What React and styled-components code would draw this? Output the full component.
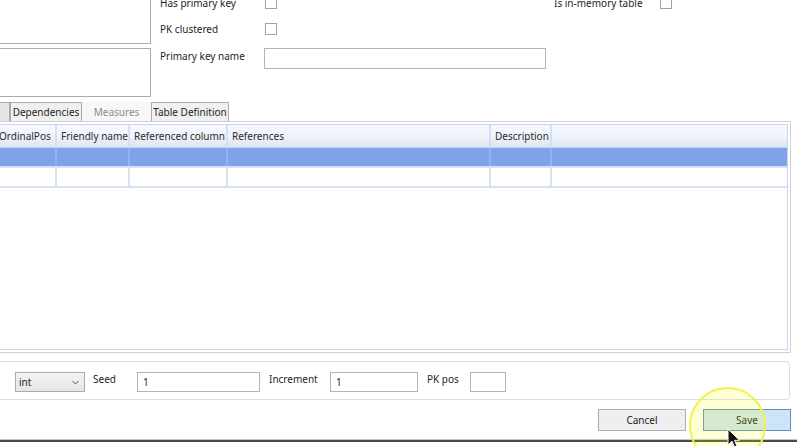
import React from 'react';
import styled, { createGlobalStyle } from 'styled-components';

const Global = createGlobalStyle`
  html, body { margin: 0; padding: 0; background: #fff; }
  body {
    font-family: "Noto Sans", "Open Sans", sans-serif;
    font-size: 10px;
    color: #1e1e1e;
  }
  * { box-sizing: border-box; }
`;

const Window = styled.div`
  position: relative;
  width: 800px;
  height: 446px;
  overflow: hidden;
  background: #fff;
  display: flex;
  flex-direction: column;
`;

/* ---------- top form ---------- */
const TopArea = styled.div`
  display: flex;
  height: 101px;
  flex-shrink: 0;
`;

const LeftBoxes = styled.div`
  width: 151px;
  display: flex;
  flex-direction: column;
  gap: 4px;
`;

const Box = styled.div`
  height: ${p => p.$h}px;
  border: 1px solid #acacac;
  border-left: none;
  ${p => (p.$cutTop ? 'border-top: none;' : '')}
  background: #fff;
`;

const FormGrid = styled.div`
  margin-left: 9px;
  margin-top: -10px;
  display: grid;
  grid-template-columns: 104px 290px 106px 20px;
  grid-auto-rows: 26px;
  align-items: center;
`;

const Label = styled.div`
  line-height: 14px;
  white-space: nowrap;
  ${p => (p.$top ? 'align-self: start; padding-top: 7px;' : '')}
`;

const CheckBox = styled.div`
  width: 12px;
  height: 12px;
  margin-left: ${p => p.$ml || 0}px;
  border: 1px solid #a3a3a3;
  background: #fff;
`;

const TextInput = styled.div`
  width: ${p => p.$w}px;
  height: ${p => p.$h || 20}px;
  border: 1px solid #b4b4b4;
  background: #fff;
  padding-left: 5px;
  display: flex;
  align-items: center;
  ${p => (p.$top ? `align-self: start; margin-top: ${p.$top}px;` : '')}
`;

/* ---------- tabs ---------- */
const TabStrip = styled.div`
  height: 20px;
  flex-shrink: 0;
  display: flex;
  align-items: flex-end;
`;

const Tab = styled.div`
  width: ${p => p.$w}px;
  height: 19px;
  display: flex;
  align-items: center;
  justify-content: center;
  white-space: nowrap;
  border: 1px solid ${p => (p.$disabled ? 'transparent' : '#acacac')};
  border-bottom: none;
  background: ${p => (p.$disabled ? '#f7f7f7' : p.$partial ? '#e4e4e4' : '#f0f0f0')};
  color: ${p => (p.$disabled ? '#8c8c8c' : '#1e1e1e')};
  ${p => (p.$partial ? 'border-left: none;' : '')}
`;

const Panel = styled.div`
  height: 232px;
  flex-shrink: 0;
  margin-left: -6px;
  width: 797px;
  border: 1px solid #d0d0d0;
  padding: 2px;
  display: flex;
`;

const Grid = styled.div`
  flex: 1;
  border: 1px solid #c6d6ef;
  background: #fff;
  display: flex;
  flex-direction: column;
  overflow: hidden;
`;

const cols = '59px 73px 98px 263px 61px 1fr';

const HeaderRow = styled.div`
  display: grid;
  grid-template-columns: ${cols};
  height: 23px;
  border-bottom: 1px solid #c6d6ef;
  background: linear-gradient(to bottom, #f7f9fd 0%, #eef2f9 55%, #dde5f3 100%);
`;

const HeaderCell = styled.div`
  display: flex;
  align-items: center;
  padding-left: ${p => (p.$first ? 1 : 4)}px;
  border-right: ${p => (p.$last ? 'none' : '2px solid #d3dff3')};
  white-space: nowrap;
  overflow: hidden;
  color: #2a2a2a;
`;

const DataRow = styled.div`
  display: grid;
  grid-template-columns: ${cols};
  height: 20px;
  border-bottom: 2px solid #d6e2f5;
  background: ${p => (p.$selected ? '#7ea3eb' : '#fff')};
`;

const DataCell = styled.div`
  border-right: ${p =>
    p.$last ? 'none' : `2px solid ${p.$selected ? '#93b3ef' : '#d6e2f5'}`};
`;

/* ---------- identity group ---------- */
const GroupBox = styled.div`
  margin-top: 8px;
  margin-left: -4px;
  width: 794px;
  height: 39px;
  flex-shrink: 0;
  border: 1px solid #d3def1;
  border-radius: 4px;
  padding: 10px 0 0 18px;
  display: flex;
  align-items: flex-start;
`;

const Combo = styled.div`
  width: 70px;
  height: 20px;
  border: 1px solid #acacac;
  background: linear-gradient(to bottom, #f2f2f2, #e6e6e6);
  display: flex;
  align-items: center;
  justify-content: space-between;
  padding: 0 5px 0 3px;
`;

const FieldLabel = styled.div`
  width: ${p => p.$w}px;
  margin-left: ${p => p.$ml || 9}px;
  line-height: 14px;
  white-space: nowrap;
`;

/* ---------- buttons ---------- */
const ButtonRow = styled.div`
  margin-top: 9px;
  display: flex;
  justify-content: flex-end;
  gap: 17px;
  padding-right: 9px;
  flex-shrink: 0;
`;

const Button = styled.div`
  width: 88px;
  height: 22px;
  display: flex;
  align-items: center;
  justify-content: center;
  border: 1px solid ${p => (p.$hover ? '#5f8ec4' : '#adadad')};
  background: ${p => (p.$hover ? '#cde5f7' : '#efefef')};
  color: #222;
`;

const BottomEdge = styled.div`
  margin-top: 8px;
  width: 797px;
  height: 3px;
  flex-shrink: 0;
  border-top: 1px solid #b8c6dc;
  background: #4a4a4a;
`;

/* ---------- overlays ---------- */
const Highlight = styled.div`
  position: absolute;
  left: 689px;
  top: 387px;
  width: 77px;
  height: 77px;
  border-radius: 50%;
  border: 2px solid #f3ef52;
  background: rgba(255, 255, 0, 0.17);
  pointer-events: none;
`;

const Cursor = styled.svg`
  position: absolute;
  left: 727px;
  top: 428px;
`;

const Chevron = () => (
  <svg width="7" height="5" viewBox="0 0 7 5">
    <path d="M0.5 1 L3.5 4 L6.5 1" fill="none" stroke="#555" strokeWidth="1" />
  </svg>
);

const headers = ['OrdinalPos', 'Friendly name', 'Referenced column', 'References', 'Description', ''];

export default function App() {
  return (
    <>
      <Global />
      <Window>
        <TopArea>
          <LeftBoxes>
            <Box $h={44} $cutTop />
            <Box $h={49} />
          </LeftBoxes>
          <FormGrid>
            <Label>Has primary key</Label>
            <div><CheckBox $ml={1} /></div>
            <Label>Is in-memory table</Label>
            <CheckBox />

            <Label>PK clustered</Label>
            <div><CheckBox $ml={1} /></div>
            <div />
            <div />

            <Label $top>Primary key name</Label>
            <TextInput $w={282} $h={21} $top={6} />
            <div />
            <div />
          </FormGrid>
        </TopArea>

        <TabStrip>
          <Tab $w={10} $partial />
          <Tab $w={72}>Dependencies</Tab>
          <Tab $w={69} $disabled>Measures</Tab>
          <Tab $w={78}>Table Definition</Tab>
        </TabStrip>

        <Panel>
          <Grid>
            <HeaderRow>
              {headers.map((h, i) => (
                <HeaderCell key={i} $first={i === 0} $last={i === headers.length - 1}>
                  {h}
                </HeaderCell>
              ))}
            </HeaderRow>
            <DataRow $selected>
              {headers.map((h, i) => (
                <DataCell key={i} $selected $last={i === headers.length - 1} />
              ))}
            </DataRow>
            <DataRow>
              {headers.map((h, i) => (
                <DataCell key={i} $last={i === headers.length - 1} />
              ))}
            </DataRow>
          </Grid>
        </Panel>

        <GroupBox>
          <Combo>
            <span>int</span>
            <Chevron />
          </Combo>
          <FieldLabel $w={44} $ml={8}>Seed</FieldLabel>
          <TextInput $w={123}>1</TextInput>
          <FieldLabel $w={61}>Increment</FieldLabel>
          <TextInput $w={88}>1</TextInput>
          <FieldLabel $w={43}>PK pos</FieldLabel>
          <TextInput $w={36} />
        </GroupBox>

        <ButtonRow>
          <Button>Cancel</Button>
          <Button $hover>Save</Button>
        </ButtonRow>

        <BottomEdge />

        <Highlight />
        <Cursor width="14" height="22" viewBox="0 0 14 22">
          <path
            d="M1 1 L1 17 L5 13.2 L8 20 L10.4 19 L7.5 12.3 L12.5 12.3 Z"
            fill="#111"
            stroke="#fff"
            strokeWidth="1"
            strokeLinejoin="round"
          />
        </Cursor>
      </Window>
    </>
  );
}
